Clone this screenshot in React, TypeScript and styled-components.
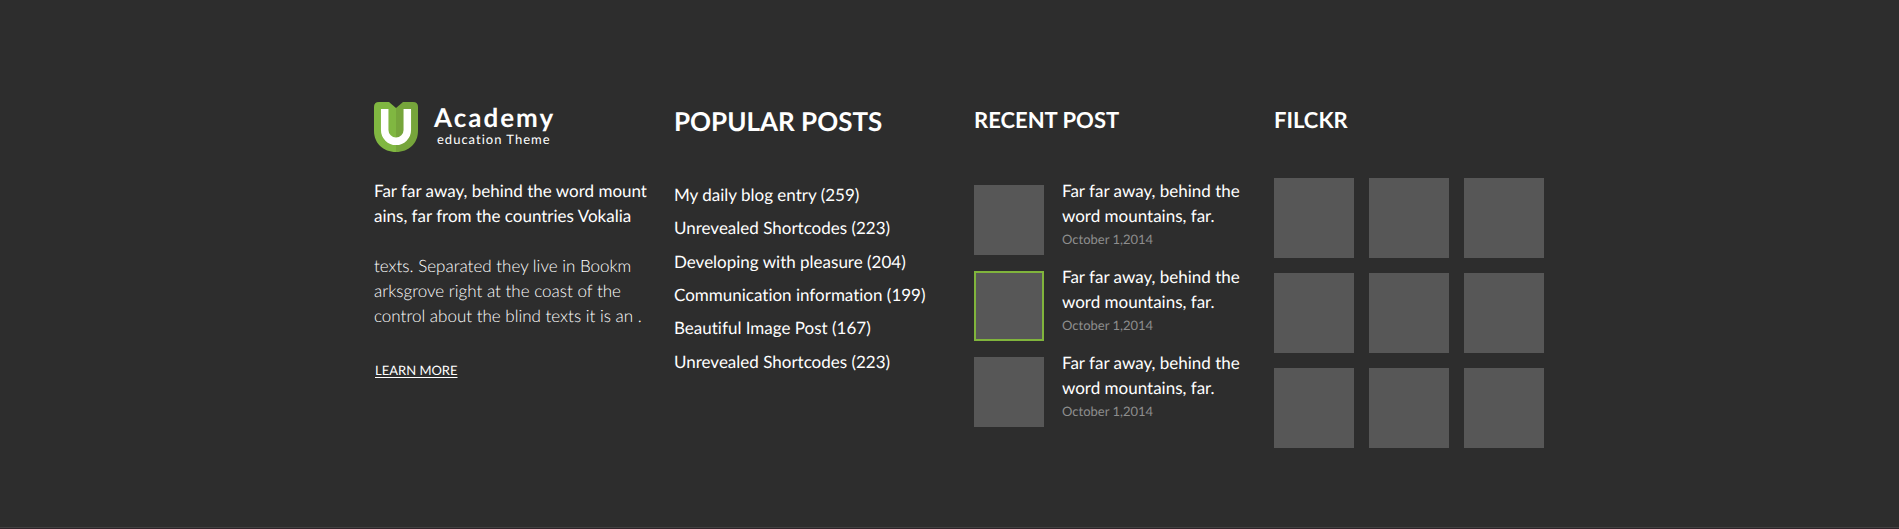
import React from "react";
import styled, { createGlobalStyle } from "styled-components";

const GlobalStyle = createGlobalStyle`
  * { box-sizing: border-box; }
  body {
    margin: 0;
    background: #2d2d2d;
    color: #fff;
    font-family: Lato, "Liberation Sans", sans-serif;
    font-variant-ligatures: none;
    text-rendering: geometricPrecision;
  }
  h2, p, ul { margin: 0; padding: 0; }
  ul { list-style: none; }
  a { color: inherit; text-decoration: none; }
`;

const Footer = styled.footer`
  display: flex;
  flex-direction: column;
  min-height: 100vh;
  padding-top: 102px;
  border-bottom: 1px solid #30252b;
`;

const Columns = styled.div`
  display: grid;
  grid-template-columns: repeat(auto-fit, minmax(270px, 1fr));
  gap: 30px;
  width: 100%;
  max-width: 1189px;
  margin: 0 auto;
  padding-left: 19px;
  flex: 1;
`;

const Rule = styled.div`
  height: 1px;
  margin-top: 48px;
  background: #414141;
`;

const Column = styled.section`
  min-width: 0;
`;

const Heading = styled.h2<{ $large?: boolean }>`
  font-size: ${(p) => (p.$large ? 26 : 22)}px;
  line-height: ${(p) => (p.$large ? 38 : 36)}px;
  font-weight: 700;
`;

const Brand = styled.a`
  display: flex;
  gap: 16px;
  height: 50px;
`;

const Mark = styled.svg`
  width: 44px;
  height: 50px;
`;

const BrandText = styled.span`
  display: flex;
  flex-direction: column;
`;

const BrandName = styled.span`
  font-size: 26px;
  line-height: 30px;
  font-weight: 700;
  letter-spacing: 2px;
`;

const BrandTag = styled.span`
  padding-left: 3px;
  font-size: 13px;
  line-height: 14px;
  letter-spacing: 1px;
`;

const Paragraph = styled.p<{ $light?: boolean }>`
  margin-top: ${(p) => (p.$light ? 25 : 26)}px;
  font-size: 17px;
  line-height: 25px;
  font-weight: ${(p) => (p.$light ? 300 : 400)};
  white-space: pre;
`;

const LearnMore = styled.a`
  display: inline-block;
  margin: 32px 0 0 1px;
  font-size: 13px;
  line-height: 20px;
  text-decoration: underline;
  text-underline-offset: 2px;
`;

const PostList = styled.ul`
  display: grid;
  grid-auto-rows: 1fr;
  align-items: center;
  height: 200px;
  margin-top: 38px;
  font-size: 17px;
  line-height: 25px;
  white-space: nowrap;
`;

const RecentList = styled.ul`
  display: flex;
  flex-direction: column;
  gap: 9px;
  margin-top: 40px;
`;

const RecentItem = styled.li`
  display: flex;
  gap: 18px;
`;

const Thumb = styled.a<{ $active?: boolean }>`
  flex: none;
  width: 70px;
  height: 70px;
  margin-top: 7px;
  background: #575757;
  border: ${(p) => (p.$active ? "2px solid #80b43c" : "none")};
`;

const RecentTitle = styled.a`
  display: block;
  font-size: 17px;
  line-height: 25px;
  white-space: pre-line;
`;

const PostDate = styled.time`
  display: block;
  font-size: 13px;
  line-height: 22px;
  color: #8e8e8e;
`;

const Gallery = styled.div`
  display: grid;
  grid-template-columns: repeat(3, 80px);
  gap: 15px;
  margin-top: 40px;
`;

const Tile = styled.a`
  height: 80px;
  background: #575757;
`;

const posts: [string, number][] = [
  ["My daily blog entry", 259],
  ["Unrevealed Shortcodes", 223],
  ["Developing with pleasure", 204],
  ["Communication information", 199],
  ["Beautiful Image Post", 167],
  ["Unrevealed Shortcodes", 223],
];

const recent = [false, true, false];

const Logo = () => (
  <Mark viewBox="0 0 44 50" aria-hidden="true">
    <path d="M5 0H15L22 6V50C9 50 0 41 0 29V5Q0 0 5 0Z" fill="#80b741" />
    <path d="M39 0H29L22 6V50C35 50 44 41 44 29V5Q44 0 39 0Z" fill="#76a53b" />
    <path d="M10.700 7V28A11.300 11.300 0 0 0 33.300 28V7" fill="none" stroke="#fff" strokeWidth="7.500" />
  </Mark>
);

export default function App() {
  return (
    <>
      <GlobalStyle />
      <Footer>
        <Columns>
          <Column>
            <Brand href="#">
              <Logo />
              <BrandText>
                <BrandName>Academy</BrandName>
                <BrandTag>education Theme</BrandTag>
              </BrandText>
            </Brand>
            <Paragraph>{"Far far away, behind the word mount\nains, far from the countries Vokalia"}</Paragraph>
            <Paragraph $light>
              {"texts. Separated they live in Bookm\narksgrove right at the coast of the\ncontrol about the blind texts it is an ."}
            </Paragraph>
            <LearnMore href="#">LEARN MORE</LearnMore>
          </Column>
          <Column>
            <Heading $large>POPULAR POSTS</Heading>
            <PostList>
              {posts.map(([title, count], i) => (
                <li key={i}>
                  <a href="#">{`${title} (${count})`}</a>
                </li>
              ))}
            </PostList>
          </Column>
          <Column>
            <Heading>RECENT POST</Heading>
            <RecentList>
              {recent.map((active, i) => (
                <RecentItem key={i}>
                  <Thumb href="#" $active={active} aria-label="Open post" />
                  <div>
                    <RecentTitle href="#">{"Far far away, behind the\nword mountains, far."}</RecentTitle>
                    <PostDate dateTime="2014-10-01">October 1,2014</PostDate>
                  </div>
                </RecentItem>
              ))}
            </RecentList>
          </Column>
          <Column>
            <Heading>FILCKR</Heading>
            <Gallery>
              {Array.from({ length: 9 }, (_, i) => (
                <Tile key={i} href="#" aria-label={`Photo ${i + 1}`} />
              ))}
            </Gallery>
          </Column>
        </Columns>
        <Rule />
      </Footer>
    </>
  );
}
